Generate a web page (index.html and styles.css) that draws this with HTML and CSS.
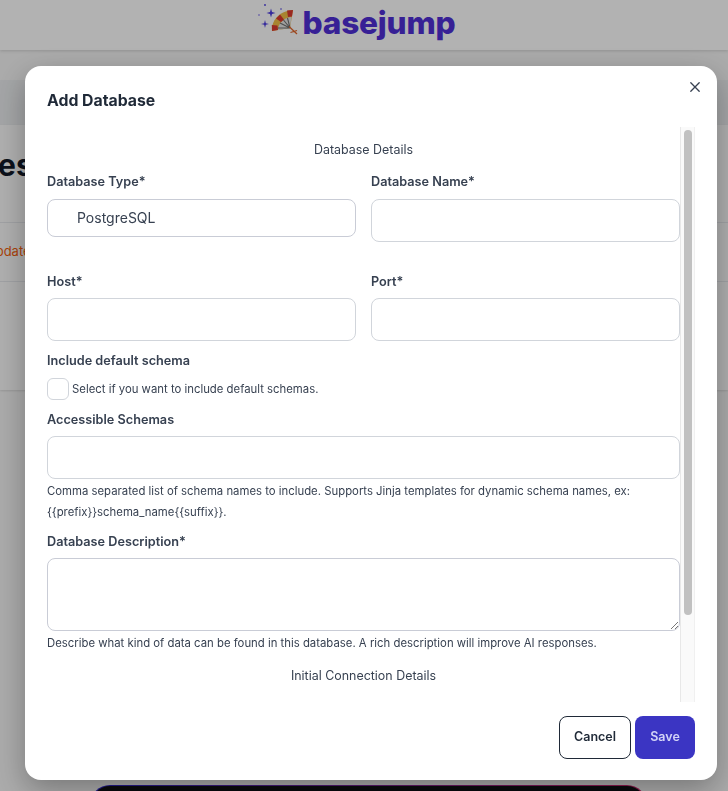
FILE: index.html
```html
<!DOCTYPE html>
<html lang="en">
<head>
<meta charset="utf-8">
<title>Add Database</title>
<link rel="stylesheet" href="styles.css">
</head>
<body>
<div class="page">
  <header class="topbar">
    <svg class="fan" viewBox="0 0 44 36" width="44" height="36" aria-hidden="true">
      <path d="M14 8.500 L15 12 L18.500 13 L15 14 L14 17.500 L13 14 L9.500 13 L13 12 Z" fill="#4a3ae0"/>
      <path d="M8 20 L8.800 23.200 L12 24 L8.800 24.800 L8 28 L7.200 24.800 L4 24 L7.200 23.200 Z" fill="#4a3ae0"/>
      <circle cx="8" cy="5" r="0.900" fill="#4a3ae0"/>
      <circle cx="2" cy="15" r="0.800" fill="#6a5ae8"/>
      <circle cx="24" cy="9" r="0.800" fill="#4a3ae0"/>
      <path d="M15 31 C14 21 22 11 36 10 L33 28 Z" fill="#f1bd45"/>
      <path d="M21 30 C21 24 26 18 34.500 17 L33 28 Z" fill="#e4e4e4"/>
      <path d="M15 31 L14.800 25 L20.500 25.500 L21 30 Z M19 18.500 L23 14.500 L27 19.500 L24 22 Z M30 10.500 L36 10 L35 16.500 L31 17 Z" fill="#dc3a30"/>
      <path d="M33 28 L21 28 M33 28 L23 23 M33 28 L26.500 20 M33 28 L30.500 18" stroke="#6f6f6f" stroke-width="1.100" fill="none"/>
      <path d="M32 26.500 L40 34 M40 30.500 L33.500 32.500" stroke="#e0662c" stroke-width="1.300" fill="none"/>
    </svg>
    <span class="wordmark">basejump</span>
  </header>
  <div class="content">
    <div class="tabs"></div>
    <section class="card">
      <div class="card-head"><h1 class="card-title">Databases</h1></div>
      <div class="card-row"><span class="card-link">Update</span></div>
      <div class="card-row card-row-tall"></div>
    </section>
    <div class="cta"></div>
  </div>
</div>

<div class="overlay">
  <div class="modal" role="dialog" aria-label="Add Database">
    <div class="modal-head">
      <h2 class="modal-title">Add Database</h2>
      <button class="close" type="button" aria-label="Close">
        <svg viewBox="0 0 12 12" width="12" height="12"><path d="M1.800 1.800 L10.200 10.200 M10.200 1.800 L1.800 10.200" stroke="#374151" stroke-width="1.300" stroke-linecap="round"/></svg>
      </button>
    </div>
    <div class="modal-body">
      <div class="form">
        <p class="section-title first">Database Details</p>
        <div class="two-col">
          <div class="field">
            <label class="label label-tall">Database Type*</label>
            <div class="select">PostgreSQL</div>
          </div>
          <div class="field">
            <label class="label label-tall">Database Name*</label>
            <div class="input"></div>
          </div>
        </div>
        <div class="two-col row-host">
          <div class="field">
            <label class="label">Host*</label>
            <div class="input"></div>
          </div>
          <div class="field">
            <label class="label">Port*</label>
            <div class="input"></div>
          </div>
        </div>
        <div class="field block-default">
          <label class="label label-tall">Include default schema</label>
          <div class="check-row">
            <span class="checkbox"></span>
            <span class="help">Select if you want to include default schemas.</span>
          </div>
        </div>
        <div class="field block-schemas">
          <label class="label">Accessible Schemas</label>
          <div class="input"></div>
          <p class="help help-block">Comma separated list of schema names to include. Supports Jinja templates for dynamic schema names, ex: {{prefix}}schema_name{{suffix}}.</p>
        </div>
        <div class="field block-desc">
          <label class="label">Database Description*</label>
          <div class="textarea">
            <svg class="grip" viewBox="0 0 9 9" width="9" height="9"><path d="M1 8 L8 1 M5 8 L8 5" stroke="#777" stroke-width="1" fill="none"/></svg>
          </div>
          <p class="help help-desc">Describe what kind of data can be found in this database. A rich description will improve AI responses.</p>
        </div>
        <p class="section-title second">Initial Connection Details</p>
      </div>
      <div class="scrollbar"><div class="scrollbar-thumb"></div></div>
    </div>
    <div class="modal-foot">
      <button class="btn btn-cancel" type="button">Cancel</button>
      <button class="btn btn-save" type="button">Save</button>
    </div>
  </div>
</div>
</body>
</html>
```
FILE: styles.css
```css
* { box-sizing: border-box; }
html, body { margin: 0; height: 791px; overflow: hidden; }
body { font-family: Inter, "Liberation Sans", sans-serif; background: #f5f5f5; color: #1f2937; }

.page { height: 791px; overflow: hidden; }
.topbar {
  height: 50px; background: #fff; display: flex; align-items: center; justify-content: center;
  padding-right: 16px; box-shadow: 0 1px 3px rgba(0,0,0,.15);
}
.fan { flex: none; margin-top: -15px; margin-right: 2px; }
.wordmark { font-size: 31.600px; font-weight: 800; color: #4f2fd6; line-height: 50px; letter-spacing: -0.2px; margin-top: -5px; }

.content { padding-top: 30px; }
.tabs { height: 45px; background: #ebedef; }
.card { background: #fbfbfb; height: 265px; box-shadow: 0 1px 2px rgba(0,0,0,.12); }
.card-head { height: 98px; border-bottom: 1px solid #e5e7eb; overflow: hidden; }
.card-title { margin: 24px 0 0 -123px; font-size: 30px; font-weight: 700; line-height: 32px; color: #111827; white-space: nowrap; }
.card-row { height: 59px; border-bottom: 1px solid #e5e7eb; padding: 20px 0 0 0; overflow: hidden; }
.card-link { display: block; margin-left: -14px; font-size: 13px; line-height: 16px; color: #f2610e; }
.card-row-tall { height: 108px; border-bottom: 0; }
.cta {
  margin: 395px 0 0 90px; width: 557px; height: 60px; border-radius: 20px; border: 1px solid transparent;
  background: linear-gradient(#0d0d12, #0d0d12) padding-box, linear-gradient(90deg, #2b23c8, #d0246c) border-box;
}

.overlay { position: fixed; inset: 0; background: rgba(0,0,0,.3); }
.modal {
  position: absolute; left: 25px; top: 66px; width: 692px; height: 714px; background: #fff; border-radius: 16px;
  box-shadow: 0 10px 30px rgba(0,0,0,.3);
  display: flex; flex-direction: column;
}
.modal-head { height: 61px; padding: 24px 16px 0 22px; display: flex; justify-content: space-between; align-items: flex-start; flex: none; }
.modal-title { margin: 0; font-size: 15.800px; font-weight: 700; line-height: 21px; color: #1f2937; }
.close { border: 0; background: none; padding: 0; margin: -9px 0 0 0; width: 12px; height: 12px; display: block; }
.close svg { display: block; }

.modal-body { margin: 0 22px; height: 575px; flex: none; display: flex; overflow: hidden; }
.form { width: 633px; flex: none; }
.scrollbar { width: 15px; flex: none; background: #fafafa; border-left: 1px solid #e8e8e8; border-right: 1px solid #f0f0f0; padding: 3px 2px 0 3px; }
.scrollbar-thumb { height: 485px; background: #c1c1c1; border-radius: 4px; }

.section-title { margin: 0; text-align: center; font-size: 12.450px; line-height: 18px; color: #374151; }
.section-title.first { padding-top: 14px; height: 46px; }
.section-title.second { margin-top: 13px; }

.two-col { display: grid; grid-template-columns: 309px 309px; column-gap: 15px; }
.row-host { margin-top: 31px; }
.field { min-width: 0; }
.label { display: block; font-size: 12.700px; font-weight: 600; line-height: 18px; height: 25px; color: #374151; }
.label-tall { height: 26px; }
.input { height: 43px; background: #fff; border: 1px solid #d1d5db; border-radius: 8px; }
.select { height: 38px; background: #fff; border: 1px solid #c9ccd6; border-radius: 8px; padding: 0 0 0 29px; font-size: 14px; line-height: 36px; color: #374151; }

.block-default { margin-top: 11px; height: 50px; }
.check-row { display: flex; align-items: center; gap: 3px; }
.checkbox { width: 22px; height: 22px; border: 1px solid #d1d5db; border-radius: 6px; background: #fff; flex: none; }
.help { font-size: 11.350px; line-height: 21px; color: #374151; margin: 0; }
.block-schemas { margin-top: 9px; }
.help-block { padding-top: 2px; }
.block-desc { margin-top: 10px; }
.textarea { height: 73px; border: 1px solid #c9ccd6; border-radius: 8px; position: relative; }
.grip { position: absolute; right: 0; bottom: 0; }
.help-desc { padding-top: 2px; }

.modal-foot { flex: 1; display: flex; justify-content: flex-end; align-items: flex-start; gap: 4px; padding: 14px 22px 0 0; }
.btn { font-family: inherit; font-size: 12.500px; font-weight: 600; height: 43px; border-radius: 8px; padding: 0 0 2px; }
.btn-cancel { width: 72px; background: #fff; border: 1px solid #1f2937; color: #1f2937; }
.btn-save { width: 60px; background: #3b35c3; border: 0; color: #d3d4f7; }
```
